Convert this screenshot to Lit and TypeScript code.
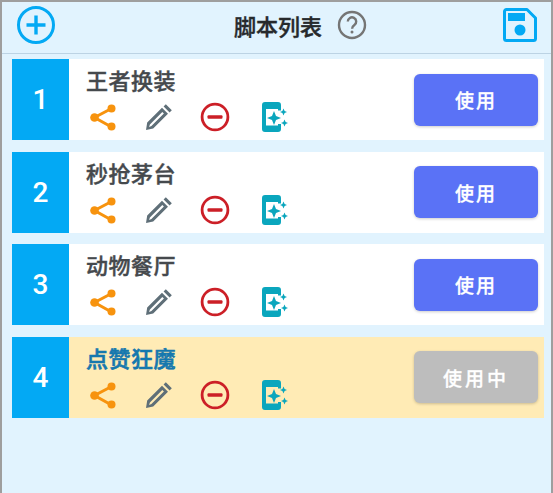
import { LitElement, html, css, svg } from "lit";
import { customElement } from "lit/decorators.js";

const share = svg`<svg class="ic s" width="30" height="30" viewBox="0 0 30 30"><path d="M23.500 6.500 6.500 15.500 23.500 25" fill="none" stroke="#f7930e" stroke-width="3"/><circle cx="23.500" cy="6.500" r="4" fill="#f7930e"/><circle cx="6.500" cy="15.500" r="4.300" fill="#f7930e"/><circle cx="23.500" cy="24.500" r="4" fill="#f7930e"/></svg>`;
const pencil = svg`<svg class="ic p" width="30" height="30" viewBox="0 0 30 30"><path d="M3 28l1.200-7.500L19 5.700l6 6L10.200 26.600zM6.900 22.600l-.8 2.300 2.300-.8L20.900 11.600 19.300 10z" fill="#5f6f78" fill-rule="evenodd"/><path d="M20.600 4.400 22.800 2.200l6 6-2.200 2.200z" fill="#5f6f78"/></svg>`;
const minus = svg`<svg class="ic m" width="30" height="30" viewBox="0 0 30 30"><circle cx="15" cy="15" r="12.900" fill="none" stroke="#cc1f27" stroke-width="2.800"/><rect x="7.500" y="13.300" width="15" height="3.400" rx="1" fill="#cc1f27"/></svg>`;
const magic = svg`<svg class="ic" width="30" height="32" viewBox="0 0 30 32"><path d="M2 4a3 3 0 0 1 3-3h13a3 3 0 0 1 3 3v5.500h-3V8H6v16.500h12V23h3v5a3 3 0 0 1-3 3H5a3 3 0 0 1-3-3z" fill="#0aa6bd"/><path d="M14 10 16 15 21 17 16 19 14 24 12 19 7 17 12 15z" fill="#0aa6bd"/><path d="M23.500 7.500 24.600 10 27 11 24.600 12 23.500 14.500 22.400 12 20 11 22.400 10zM24.500 18.500 25.600 21 28 22 25.600 23 24.500 25.500 23.400 23 21 22 23.400 21z" fill="#0aa6bd"/></svg>`;

const rows = [
  { n: 1, t: "王者换装" },
  { n: 2, t: "秒抢茅台" },
  { n: 3, t: "动物餐厅" },
  { n: 4, t: "点赞狂魔", active: true },
];

@customElement("app-root")
export class AppRoot extends LitElement {
  static styles = css`
    :host { display: block; width: 553px; height: 493px; overflow: hidden;
      font-family: Roboto, "Noto Sans CJK SC", sans-serif; }
    .frame { box-sizing: border-box; height: 493px; background: #e1f3fe;
      border-top: 2px solid #9e9e9e; border-left: 2px solid #9e9e9e; border-right: 2px solid #9e9e9e; }
    .head { box-sizing: border-box; height: 52px; border-bottom: 1px solid #bcd3e4;
      display: flex; align-items: center; padding: 0 14px 5px 14px; }
    .center { display: flex; align-items: center; gap: 15px; font-size: 22px; font-weight: 500; color: #26292c; margin-left: 178px; -webkit-text-stroke: .4px #26292c; }
    .save { margin-left: auto; }
    .list { display: flex; flex-direction: column; gap: 11.500px; padding: 5px 7px 0 10px; }
    .row { display: flex; height: 81px; background: #fff; }
    .row.on { background: #ffebb5; }
    .num { width: 57px; flex: none; background: #03a9f4; color: #fff; font-size: 28px; font-weight: 500;
      display: flex; align-items: center; justify-content: center; }
    .body { flex: 1; padding: 9px 0 0 17px; display: flex; flex-direction: column; }
    .title { font-size: 22px; font-weight: 500; line-height: 28px; color: #45494d; letter-spacing: .5px; -webkit-text-stroke: .4px #45494d; }
    .on .title { color: #1578ae; -webkit-text-stroke: .6px #1578ae; }
    .icons { display: flex; align-items: center; margin-top: 4px; height: 34px; padding-left: 2px; }
    .ic { display: block; flex: none; }
    .s { margin-right: 25px; }
    .p { margin-right: 27px; }
    .m { margin-right: 30px; }
    .btn { width: 124px; height: 52px; align-self: center; margin-right: 6px; border-radius: 6px; background: #5a72f6;
      color: #fff; font-size: 19px; font-weight: 500; letter-spacing: 2px; -webkit-text-stroke: .3px #fff; display: flex; align-items: center; justify-content: center;
      box-shadow: 0 1px 3px rgba(0,0,0,.2); }
    .on .btn { background: #bdbdbd; letter-spacing: 3px; }
  `;

  render() {
    return html`<div class="frame">
      <div class="head">
        <svg class="ic" width="40" height="40" viewBox="0 0 40 40"><circle cx="20" cy="20" r="17.500" fill="none" stroke="#03a9f4" stroke-width="3"/><path d="M20 10.500v19M10.500 20h19" stroke="#03a9f4" stroke-width="3.400" fill="none"/></svg>
        <div class="center"><span>脚本列表</span>
          <svg class="ic" width="30" height="30" viewBox="0 0 30 30" stroke-width="0"><circle cx="15" cy="15" r="13" fill="none" stroke="#757575" stroke-width="2.400"/><path d="M10.800 11.500a4.200 4.200 0 1 1 6.600 3.500c-1.500 1-2.300 1.800-2.300 3.800" fill="none" stroke="#757575" stroke-width="2.400"/><circle cx="15" cy="22" r="1.500" fill="#757575"/></svg>
        </div>
        <svg class="ic save" width="34" height="34" viewBox="0 0 34 34"><path d="M3.500 1.500H24L32.500 10V30.500a2 2 0 0 1-2 2H3.500a2 2 0 0 1-2-2V3.500a2 2 0 0 1 2-2z" fill="none" stroke="#03a9f4" stroke-width="3" stroke-linejoin="round"/><rect x="5" y="5" width="17" height="8" fill="#03a9f4"/><circle cx="17" cy="22" r="5.500" fill="#03a9f4"/></svg>
      </div>
      <div class="list">
        ${rows.map(r => html`<div class="row ${r.active ? "on" : ""}">
          <div class="num">${r.n}</div>
          <div class="body">
            <div class="title">${r.t}</div>
            <div class="icons">${share}${pencil}${minus}${magic}</div>
          </div>
          <div class="btn">${r.active ? "使用中" : "使用"}</div>
        </div>`)}
      </div>
    </div>`;
  }
}
